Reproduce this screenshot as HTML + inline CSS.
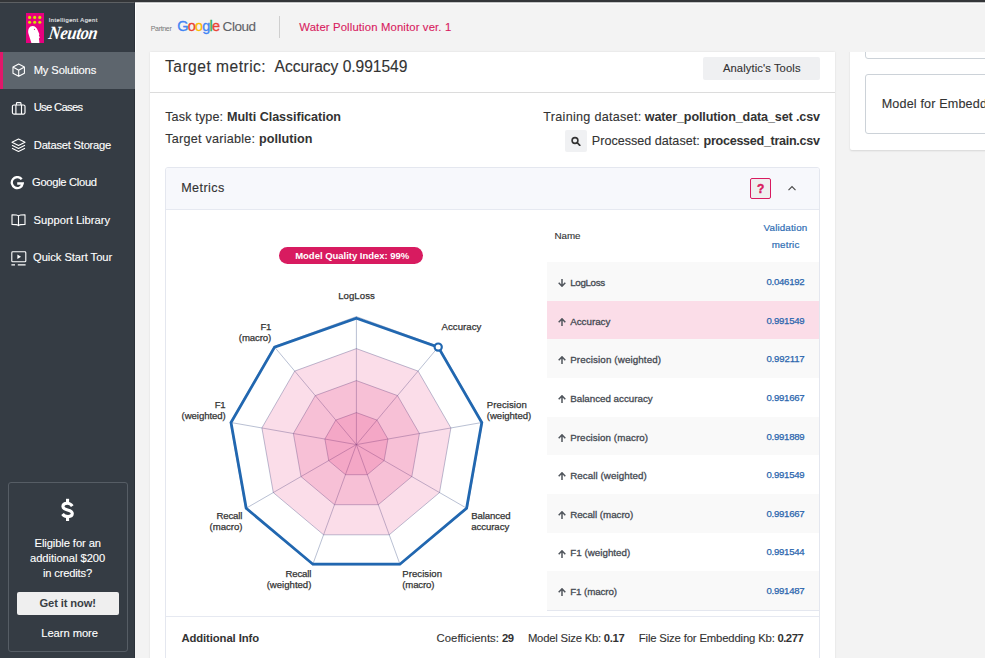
<!DOCTYPE html>
<html><head><meta charset="utf-8">
<style>
*{box-sizing:border-box;margin:0;padding:0}
html,body{width:985px;height:658px;overflow:hidden;background:#f3f3f3;font-family:"Liberation Sans",sans-serif;color:#333}
.abs{position:absolute}
.t{position:absolute;white-space:nowrap;z-index:5}
</style></head><body>
<!-- right card (scrolled under fixed header) -->
<div class="abs" style="left:849.5px;top:40px;width:160px;height:109.5px;background:#fff;box-shadow:0 1px 2px rgba(0,0,0,0.12);border-radius:2px"></div>
<div class="abs" style="left:865px;top:29px;width:140px;height:30px;border:1px solid #ccd2d8;border-radius:3px;background:#fff"></div>
<div class="abs" style="left:865px;top:74px;width:140px;height:60px;border:1px solid #ccd2d8;border-radius:3px;background:#fff"></div>
<!-- header strip -->
<div class="abs" style="left:135px;top:2px;width:850px;height:50px;background:#f3f3f3;border-top:1px solid #fff;border-left:1px solid #fff"></div>
<div class="abs" style="left:135px;top:2px;width:850px;height:1px;background:#c4c5c6"></div><div class="abs" style="left:136px;top:3px;width:849px;height:1px;background:#fbfbfb"></div>
<div class="abs" style="left:279px;top:16px;width:1px;height:22px;background:#cfcfcf"></div>

<!-- main card -->
<div class="abs" style="left:150px;top:52px;width:685px;height:620px;background:#fff;box-shadow:0 0 2px rgba(0,0,0,0.10)"></div>
<div class="abs" style="left:703px;top:57px;width:117px;height:22.5px;background:#eff0f2;border-radius:2px"></div>
<div class="abs" style="left:150px;top:92px;width:685px;height:1px;background:#dcdcdc"></div>
<div class="abs" style="left:565px;top:130px;width:22px;height:22px;background:#f0f1f3;border-radius:2px"></div>
<svg class="abs" style="left:571px;top:135.8px;width:10px;height:10px" viewBox="0 0 10 10"><circle cx="4" cy="4.5" r="2.9" fill="none" stroke="#333" stroke-width="1.6"/><path d="M6.2 6.7L8.8 9.3" stroke="#333" stroke-width="1.7" stroke-linecap="round"/></svg>

<!-- metrics panel -->
<div class="abs" style="left:165px;top:167px;width:655px;height:500px;border:1px solid #e4e7ef;border-radius:3px;background:#fff"></div>
<div class="abs" style="left:166px;top:168px;width:653px;height:41.5px;background:#f7f8fc;border-bottom:1px solid #e6e9f1;border-radius:2px 2px 0 0"></div>
<div class="abs" style="left:750px;top:178px;width:21px;height:21px;border:1px solid #d81b60;border-radius:2px;background:#efefef"></div>
<svg class="abs" style="left:787px;top:184px;width:10px;height:8px" viewBox="0 0 10 8"><path d="M1.5 6.1L5 2.5L8.5 6.1" fill="none" stroke="#4a4a4a" stroke-width="1.15"/></svg>
<div class="abs" style="left:279.4px;top:247px;width:144px;height:17px;border-radius:9px;background:#d81b60"></div>

<svg class="abs" style="left:0;top:0;width:985px;height:658px" viewBox="0 0 985 658">
<polygon points="356.4,412.6 377.0,420.1 387.9,439.0 384.1,460.6 367.3,474.7 345.5,474.7 328.7,460.6 324.9,439.0 335.8,420.1" fill="none" stroke="rgba(80,98,145,0.5)" stroke-width="0.8"/>
<polygon points="356.4,380.6 397.5,395.6 419.4,433.5 411.8,476.6 378.3,504.7 334.5,504.7 301.0,476.6 293.4,433.5 315.3,395.6" fill="none" stroke="rgba(80,98,145,0.5)" stroke-width="0.8"/>
<polygon points="356.4,348.6 418.1,371.1 450.9,427.9 439.5,492.6 389.2,534.8 323.6,534.8 273.3,492.6 261.9,427.9 294.7,371.1" fill="none" stroke="rgba(80,98,145,0.5)" stroke-width="0.8"/>
<polygon points="356.4,316.6 438.7,346.5 482.5,422.4 467.3,508.6 400.2,564.9 312.6,564.9 245.5,508.6 230.3,422.4 274.1,346.5" fill="none" stroke="rgba(80,98,145,0.5)" stroke-width="0.8"/>
<line x1="356.4" y1="444.6" x2="356.4" y2="316.6" stroke="rgba(80,98,145,0.5)" stroke-width="0.8"/>
<line x1="356.4" y1="444.6" x2="438.7" y2="346.5" stroke="rgba(80,98,145,0.5)" stroke-width="0.8"/>
<line x1="356.4" y1="444.6" x2="482.5" y2="422.4" stroke="rgba(80,98,145,0.5)" stroke-width="0.8"/>
<line x1="356.4" y1="444.6" x2="467.3" y2="508.6" stroke="rgba(80,98,145,0.5)" stroke-width="0.8"/>
<line x1="356.4" y1="444.6" x2="400.2" y2="564.9" stroke="rgba(80,98,145,0.5)" stroke-width="0.8"/>
<line x1="356.4" y1="444.6" x2="312.6" y2="564.9" stroke="rgba(80,98,145,0.5)" stroke-width="0.8"/>
<line x1="356.4" y1="444.6" x2="245.5" y2="508.6" stroke="rgba(80,98,145,0.5)" stroke-width="0.8"/>
<line x1="356.4" y1="444.6" x2="230.3" y2="422.4" stroke="rgba(80,98,145,0.5)" stroke-width="0.8"/>
<line x1="356.4" y1="444.6" x2="274.1" y2="346.5" stroke="rgba(80,98,145,0.5)" stroke-width="0.8"/>
<polygon points="356.4,348.6 418.1,371.1 450.9,427.9 439.5,492.6 389.2,534.8 323.6,534.8 273.3,492.6 261.9,427.9 294.7,371.1" fill="rgba(226,29,106,0.15)" stroke="none"/>
<polygon points="356.4,380.6 397.5,395.6 419.4,433.5 411.8,476.6 378.3,504.7 334.5,504.7 301.0,476.6 293.4,433.5 315.3,395.6" fill="rgba(226,29,106,0.15)" stroke="none"/>
<polygon points="356.4,412.6 377.0,420.1 387.9,439.0 384.1,460.6 367.3,474.7 345.5,474.7 328.7,460.6 324.9,439.0 335.8,420.1" fill="rgba(226,29,106,0.15)" stroke="none"/>
<polygon points="356.4,318.3 438.2,347.1 481.8,422.5 466.6,508.2 399.9,564.2 312.9,564.2 246.2,508.3 231.0,422.5 274.6,347.1" fill="none" stroke="#2167b0" stroke-width="2.8" stroke-linejoin="miter"/>
<circle cx="438.2" cy="347.1" r="3.6" fill="#fff" stroke="#2167b0" stroke-width="2.2"/>

</svg>

<div class="abs" style="left:547px;top:262.00px;width:272px;height:38.95px;background:#f9f9f9"></div>
<svg class="abs" style="left:558px;top:279.12px;width:8px;height:8px" viewBox="0 0 8 8"><path d="M4 0V7.1M0.7 3.8L4 7.2L7.3 3.8" fill="none" stroke="#50555c" stroke-width="1.5"/></svg>
<div class="abs" style="left:547px;top:300.65px;width:272px;height:38.95px;background:#fbdde8"></div>
<svg class="abs" style="left:558px;top:317.77px;width:8px;height:8px" viewBox="0 0 8 8"><path d="M4 8V0.9M0.7 4.2L4 0.8L7.3 4.2" fill="none" stroke="#50555c" stroke-width="1.5"/></svg>
<div class="abs" style="left:547px;top:339.30px;width:272px;height:38.95px;background:#f9f9f9"></div>
<svg class="abs" style="left:558px;top:356.43px;width:8px;height:8px" viewBox="0 0 8 8"><path d="M4 8V0.9M0.7 4.2L4 0.8L7.3 4.2" fill="none" stroke="#50555c" stroke-width="1.5"/></svg>
<div class="abs" style="left:547px;top:377.95px;width:272px;height:38.95px;background:#ffffff"></div>
<svg class="abs" style="left:558px;top:395.07px;width:8px;height:8px" viewBox="0 0 8 8"><path d="M4 8V0.9M0.7 4.2L4 0.8L7.3 4.2" fill="none" stroke="#50555c" stroke-width="1.5"/></svg>
<div class="abs" style="left:547px;top:416.60px;width:272px;height:38.95px;background:#f9f9f9"></div>
<svg class="abs" style="left:558px;top:433.73px;width:8px;height:8px" viewBox="0 0 8 8"><path d="M4 8V0.9M0.7 4.2L4 0.8L7.3 4.2" fill="none" stroke="#50555c" stroke-width="1.5"/></svg>
<div class="abs" style="left:547px;top:455.25px;width:272px;height:38.95px;background:#ffffff"></div>
<svg class="abs" style="left:558px;top:472.38px;width:8px;height:8px" viewBox="0 0 8 8"><path d="M4 8V0.9M0.7 4.2L4 0.8L7.3 4.2" fill="none" stroke="#50555c" stroke-width="1.5"/></svg>
<div class="abs" style="left:547px;top:493.90px;width:272px;height:38.95px;background:#f9f9f9"></div>
<svg class="abs" style="left:558px;top:511.03px;width:8px;height:8px" viewBox="0 0 8 8"><path d="M4 8V0.9M0.7 4.2L4 0.8L7.3 4.2" fill="none" stroke="#50555c" stroke-width="1.5"/></svg>
<div class="abs" style="left:547px;top:532.55px;width:272px;height:38.95px;background:#ffffff"></div>
<svg class="abs" style="left:558px;top:549.67px;width:8px;height:8px" viewBox="0 0 8 8"><path d="M4 8V0.9M0.7 4.2L4 0.8L7.3 4.2" fill="none" stroke="#50555c" stroke-width="1.5"/></svg>
<div class="abs" style="left:547px;top:571.20px;width:272px;height:38.95px;background:#f9f9f9"></div>
<svg class="abs" style="left:558px;top:588.33px;width:8px;height:8px" viewBox="0 0 8 8"><path d="M4 8V0.9M0.7 4.2L4 0.8L7.3 4.2" fill="none" stroke="#50555c" stroke-width="1.5"/></svg>

<div class="abs" style="left:547px;top:609.6px;width:272px;height:1px;background:#e4e7ef"></div>
<div class="abs" style="left:166px;top:616px;width:653px;height:1px;background:#e6e9f1"></div>

<!-- top bar + sidebar -->
<div class="abs" style="left:0;top:0;width:985px;height:2px;background:#333538"></div>
<div class="abs" style="left:0;top:2px;width:135px;height:656px;background:#353c44;border-top:1px solid #5d6063;border-right:1px solid #2b3139"></div>
<div class="abs" style="left:0;top:52px;width:135px;height:37px;background:#5d656d;border-left:3px solid #e0186a"></div>
<div class="abs" style="left:26px;top:13px;width:18px;height:30px;background:#e6007e"></div>
<svg class="abs" style="left:26px;top:13px;width:18px;height:30px" viewBox="0 0 18 30">
<g fill="#d2e300"><circle cx="3.6" cy="4.4" r="1.55"/><circle cx="8.7" cy="4.4" r="1.55"/><circle cx="13.8" cy="4.4" r="1.55"/><circle cx="3.6" cy="9.3" r="1.55"/><circle cx="8.7" cy="9.3" r="1.55"/><circle cx="13.8" cy="9.3" r="1.55"/></g>
<path d="M5.4 30 L2.4 20.5 C1.5 16.5 3.6 13 6.6 13 C9 13 10.8 14.8 11.6 17 L13.4 21.2 L12.9 22.2 L13.8 24.8 L12.9 25.6 L13.2 27.4 L13.4 30 Z" fill="#fff"/>
<circle cx="8.5" cy="16.3" r="0.6" fill="#e6007e"/>
</svg>
<svg class="abs" style="left:11.9px;top:63.2px;width:13.4px;height:14.3px" viewBox="0 0 14 15"><path d="M7 1L13 4.2V10.8L7 14L1 10.8V4.2Z M1 4.2L7 7.5L13 4.2 M7 7.5V14" fill="none" stroke="#fff" stroke-width="1.15" stroke-linejoin="round"/></svg>
<svg class="abs" style="left:11px;top:100px;width:15px;height:15px" viewBox="0 0 15 15"><path d="M2.9 5H12.5A1.5 1.5 0 0 1 14 6.5V12.6A1.5 1.5 0 0 1 12.5 14.1H2.9A1.5 1.5 0 0 1 1.4 12.6V6.5A1.5 1.5 0 0 1 2.9 5Z M4.9 5V14.1 M10.5 5V14.1 M5.4 4.8V3.5A0.9 0.9 0 0 1 6.3 2.6H9.1A0.9 0.9 0 0 1 10 3.5V4.8" fill="none" stroke="#fff" stroke-width="1.15"/></svg>
<svg class="abs" style="left:11px;top:138px;width:15px;height:15px" viewBox="0 0 15 15"><path d="M7.5 1L14 4.2L7.5 7.4L1 4.2Z M1 7.2L7.5 10.4L14 7.2 M1 10.2L7.5 13.4L14 10.2" fill="none" stroke="#fff" stroke-width="1.1" stroke-linejoin="round"/></svg>
<svg class="abs" style="left:9.9px;top:176px;width:14px;height:14px" viewBox="0 0 14 14"><path d="M11.7 3.3A5.5 5.5 0 1 0 12.7 7.5H7.2" fill="none" stroke="#fff" stroke-width="2.3"/></svg>
<svg class="abs" style="left:11px;top:213px;width:15px;height:15px" viewBox="0 0 15 15"><path d="M7.5 2.8C6.5 1.9 5 1.7 1 1.7V11.4C5 11.4 6.5 11.6 7.5 12.6C8.5 11.6 10 11.4 14 11.4V1.7C10 1.7 8.5 1.9 7.5 2.8Z M7.5 2.8V13" fill="none" stroke="#fff" stroke-width="1.1" stroke-linejoin="round"/></svg>
<svg class="abs" style="left:11px;top:251px;width:16px;height:15px" viewBox="0 0 16 15"><rect x="0.8" y="0.8" width="14" height="10" rx="0.9" fill="none" stroke="#fff" stroke-width="1.1"/><path d="M6.4 3.6L10 5.8L6.4 8Z" fill="#fff"/><path d="M0.4 13.8H4 M6.8 13.8H14.6" stroke="#fff" stroke-width="1.3"/></svg>
<div class="abs" style="left:8px;top:482.3px;width:120px;height:170px;border:1px solid #565d65;border-radius:3px"></div>
<div class="abs" style="left:17px;top:592px;width:102px;height:23px;background:#efefef;border-radius:2px"></div>
<svg class="abs" style="left:55px;top:495px;width:26px;height:30px" viewBox="55 495 26 30"><path d="M72.3 506.2C70.8 503.9 68.9 503.3 67.2 503.3C64.5 503.3 62.9 504.7 62.9 506.5C62.9 508.5 64.6 509.1 67.6 509.9C70.8 510.7 72.3 511.5 72.3 513.6C72.3 515.6 70.5 516.6 68 516.6C65.6 516.6 63.8 515.8 62.5 514" fill="none" stroke="#fff" stroke-width="3.1"/><rect x="66" y="498.8" width="3.1" height="4.4" fill="#fff"/><rect x="66" y="516.6" width="3.1" height="4.4" fill="#fff"/></svg>

<span class="t" id="partner" style="left:150.7px;top:25.30px;font-size:7px;line-height:7px;font-weight:normal;color:#777;font-family:'Liberation Sans',sans-serif;letter-spacing:-0.311px;">Partner</span>
<span class="t" id="goog" style="left:177.2px;top:19.05px;font-size:14.5px;line-height:14.5px;font-weight:normal;color:#333;font-family:'Liberation Sans',sans-serif;letter-spacing:-0.806px;-webkit-text-stroke:0.3px;"><span style="color:#4285f4">G</span><span style="color:#ea4335">o</span><span style="color:#fbbc05">o</span><span style="color:#4285f4">g</span><span style="color:#34a853">l</span><span style="color:#ea4335">e</span></span>
<span class="t" id="cloud" style="left:222.6px;top:20.05px;font-size:13.5px;line-height:13.5px;font-weight:normal;color:#5f6368;font-family:'Liberation Sans',sans-serif;letter-spacing:-0.445px;-webkit-text-stroke:0.12px;">Cloud</span>
<span class="t" id="ttl" style="left:299.3px;top:21.65px;font-size:11.3px;line-height:11.3px;font-weight:normal;color:#d81b60;font-family:'Liberation Sans',sans-serif;letter-spacing:0.143px;-webkit-text-stroke:0.12px;">Water Pollution Monitor ver. 1</span>
<span class="t" id="tm" style="left:165.0px;top:59.00px;font-size:15.6px;line-height:15.6px;font-weight:normal;color:#333;font-family:'Liberation Sans',sans-serif;letter-spacing:0.481px;-webkit-text-stroke:0.12px;">Target metric:</span>
<span class="t" id="tm2" style="left:274.6px;top:59.00px;font-size:15.6px;line-height:15.6px;font-weight:normal;color:#333;font-family:'Liberation Sans',sans-serif;letter-spacing:-0.044px;-webkit-text-stroke:0.12px;">Accuracy 0.991549</span>
<span class="t" id="at" style="left:722.9px;top:62.70px;font-size:11.2px;line-height:11.2px;font-weight:normal;color:#333;font-family:'Liberation Sans',sans-serif;letter-spacing:0.111px;-webkit-text-stroke:0.12px;">Analytic's Tools</span>
<span class="t" id="tt1" style="left:165.2px;top:111.00px;font-size:12.6px;line-height:12.6px;font-weight:normal;color:#333;font-family:'Liberation Sans',sans-serif;letter-spacing:0.133px;-webkit-text-stroke:0.12px;">Task type:</span>
<span class="t" id="tt2" style="left:227.0px;top:111.00px;font-size:12.6px;line-height:12.6px;font-weight:bold;color:#333;font-family:'Liberation Sans',sans-serif;letter-spacing:-0.040px;">Multi Classification</span>
<span class="t" id="tv1" style="left:165.2px;top:133.00px;font-size:12.6px;line-height:12.6px;font-weight:normal;color:#333;font-family:'Liberation Sans',sans-serif;letter-spacing:0.253px;-webkit-text-stroke:0.12px;">Target variable:</span>
<span class="t" id="tv2" style="left:259.0px;top:133.00px;font-size:12.6px;line-height:12.6px;font-weight:bold;color:#333;font-family:'Liberation Sans',sans-serif;letter-spacing:0.030px;">pollution</span>
<span class="t" id="td1" style="left:543.3px;top:111.00px;font-size:12.6px;line-height:12.6px;font-weight:normal;color:#333;font-family:'Liberation Sans',sans-serif;letter-spacing:0.285px;-webkit-text-stroke:0.12px;">Training dataset:</span>
<span class="t" id="td2" style="left:644.8px;top:111.00px;font-size:12.6px;line-height:12.6px;font-weight:bold;color:#333;font-family:'Liberation Sans',sans-serif;letter-spacing:-0.142px;">water_pollution_data_set .csv</span>
<span class="t" id="pd1" style="left:591.8px;top:135.00px;font-size:12.6px;line-height:12.6px;font-weight:normal;color:#333;font-family:'Liberation Sans',sans-serif;letter-spacing:0.005px;-webkit-text-stroke:0.12px;">Processed dataset:</span>
<span class="t" id="pd2" style="left:703.6px;top:135.00px;font-size:12.6px;line-height:12.6px;font-weight:bold;color:#333;font-family:'Liberation Sans',sans-serif;letter-spacing:-0.301px;">processed_train.csv</span>
<span class="t" id="mt" style="left:181.2px;top:182.00px;font-size:12.6px;line-height:12.6px;font-weight:normal;color:#333;font-family:'Liberation Sans',sans-serif;letter-spacing:0.434px;-webkit-text-stroke:0.12px;">Metrics</span>
<span class="t" id="q" style="left:757.0px;top:183.30px;font-size:12px;line-height:12px;font-weight:bold;color:#d81b60;font-family:'Liberation Sans',sans-serif;letter-spacing:0.000px;-webkit-text-stroke:0.4px #d81b60;">?</span>
<span class="t" id="bd" style="left:295.2px;top:251.05px;font-size:9.5px;line-height:9.5px;font-weight:bold;color:#fff;font-family:'Liberation Sans',sans-serif;letter-spacing:-0.024px;">Model Quality Index: 99%</span>
<span class="t" id="hn" style="left:554.6px;top:230.90px;font-size:9.8px;line-height:9.8px;font-weight:normal;color:#333;font-family:'Liberation Sans',sans-serif;letter-spacing:-0.114px;-webkit-text-stroke:0.12px;">Name</span>
<span class="t" id="hv1" style="left:763.6px;top:222.90px;font-size:9.8px;line-height:9.8px;font-weight:normal;color:#2e6db4;font-family:'Liberation Sans',sans-serif;letter-spacing:0.143px;-webkit-text-stroke:0.2px #2e6db4;">Validation</span>
<span class="t" id="hv2" style="left:771.8px;top:239.90px;font-size:9.8px;line-height:9.8px;font-weight:normal;color:#2e6db4;font-family:'Liberation Sans',sans-serif;letter-spacing:0.166px;-webkit-text-stroke:0.2px #2e6db4;">metric</span>
<span class="t" id="rn0" style="left:570.2px;top:277.90px;font-size:9.8px;line-height:9.8px;font-weight:normal;color:#454a52;font-family:'Liberation Sans',sans-serif;letter-spacing:-0.341px;-webkit-text-stroke:0.3px #454a52;">LogLoss</span>
<span class="t" id="rv0" style="left:766.4px;top:277.00px;font-size:9.6px;line-height:9.6px;font-weight:normal;color:#2a65ad;font-family:'Liberation Sans',sans-serif;letter-spacing:-0.245px;-webkit-text-stroke:0.25px #2a65ad;">0.046192</span>
<span class="t" id="rn1" style="left:570.2px;top:316.90px;font-size:9.8px;line-height:9.8px;font-weight:normal;color:#454a52;font-family:'Liberation Sans',sans-serif;letter-spacing:-0.014px;-webkit-text-stroke:0.3px #454a52;">Accuracy</span>
<span class="t" id="rv1" style="left:766.4px;top:316.00px;font-size:9.6px;line-height:9.6px;font-weight:normal;color:#2a65ad;font-family:'Liberation Sans',sans-serif;letter-spacing:-0.245px;-webkit-text-stroke:0.25px #2a65ad;">0.991549</span>
<span class="t" id="rn2" style="left:570.2px;top:354.90px;font-size:9.8px;line-height:9.8px;font-weight:normal;color:#454a52;font-family:'Liberation Sans',sans-serif;letter-spacing:0.112px;-webkit-text-stroke:0.3px #454a52;">Precision (weighted)</span>
<span class="t" id="rv2" style="left:766.4px;top:354.00px;font-size:9.6px;line-height:9.6px;font-weight:normal;color:#2a65ad;font-family:'Liberation Sans',sans-serif;letter-spacing:-0.145px;-webkit-text-stroke:0.25px #2a65ad;">0.992117</span>
<span class="t" id="rn3" style="left:570.2px;top:393.90px;font-size:9.8px;line-height:9.8px;font-weight:normal;color:#454a52;font-family:'Liberation Sans',sans-serif;letter-spacing:-0.018px;-webkit-text-stroke:0.3px #454a52;">Balanced accuracy</span>
<span class="t" id="rv3" style="left:766.4px;top:393.00px;font-size:9.6px;line-height:9.6px;font-weight:normal;color:#2a65ad;font-family:'Liberation Sans',sans-serif;letter-spacing:-0.245px;-webkit-text-stroke:0.25px #2a65ad;">0.991667</span>
<span class="t" id="rn4" style="left:570.2px;top:432.90px;font-size:9.8px;line-height:9.8px;font-weight:normal;color:#454a52;font-family:'Liberation Sans',sans-serif;letter-spacing:0.065px;-webkit-text-stroke:0.3px #454a52;">Precision (macro)</span>
<span class="t" id="rv4" style="left:766.4px;top:432.00px;font-size:9.6px;line-height:9.6px;font-weight:normal;color:#2a65ad;font-family:'Liberation Sans',sans-serif;letter-spacing:-0.245px;-webkit-text-stroke:0.25px #2a65ad;">0.991889</span>
<span class="t" id="rn5" style="left:570.2px;top:470.90px;font-size:9.8px;line-height:9.8px;font-weight:normal;color:#454a52;font-family:'Liberation Sans',sans-serif;letter-spacing:0.057px;-webkit-text-stroke:0.3px #454a52;">Recall (weighted)</span>
<span class="t" id="rv5" style="left:766.4px;top:470.00px;font-size:9.6px;line-height:9.6px;font-weight:normal;color:#2a65ad;font-family:'Liberation Sans',sans-serif;letter-spacing:-0.245px;-webkit-text-stroke:0.25px #2a65ad;">0.991549</span>
<span class="t" id="rn6" style="left:570.2px;top:509.90px;font-size:9.8px;line-height:9.8px;font-weight:normal;color:#454a52;font-family:'Liberation Sans',sans-serif;letter-spacing:-0.046px;-webkit-text-stroke:0.3px #454a52;">Recall (macro)</span>
<span class="t" id="rv6" style="left:766.4px;top:509.00px;font-size:9.6px;line-height:9.6px;font-weight:normal;color:#2a65ad;font-family:'Liberation Sans',sans-serif;letter-spacing:-0.245px;-webkit-text-stroke:0.25px #2a65ad;">0.991667</span>
<span class="t" id="rn7" style="left:570.2px;top:547.90px;font-size:9.8px;line-height:9.8px;font-weight:normal;color:#454a52;font-family:'Liberation Sans',sans-serif;letter-spacing:0.016px;-webkit-text-stroke:0.3px #454a52;">F1 (weighted)</span>
<span class="t" id="rv7" style="left:766.4px;top:547.00px;font-size:9.6px;line-height:9.6px;font-weight:normal;color:#2a65ad;font-family:'Liberation Sans',sans-serif;letter-spacing:-0.245px;-webkit-text-stroke:0.25px #2a65ad;">0.991544</span>
<span class="t" id="rn8" style="left:570.2px;top:586.90px;font-size:9.8px;line-height:9.8px;font-weight:normal;color:#454a52;font-family:'Liberation Sans',sans-serif;letter-spacing:-0.112px;-webkit-text-stroke:0.3px #454a52;">F1 (macro)</span>
<span class="t" id="rv8" style="left:766.4px;top:586.00px;font-size:9.6px;line-height:9.6px;font-weight:normal;color:#2a65ad;font-family:'Liberation Sans',sans-serif;letter-spacing:-0.245px;-webkit-text-stroke:0.25px #2a65ad;">0.991487</span>
<span class="t" id="l0" style="left:338.2px;top:291.00px;font-size:9.6px;line-height:9.6px;font-weight:normal;color:#333;font-family:'Liberation Sans',sans-serif;letter-spacing:0.053px;-webkit-text-stroke:0.25px #333;">LogLoss</span>
<span class="t" id="l1" style="left:441.5px;top:322.00px;font-size:9.6px;line-height:9.6px;font-weight:normal;color:#333;font-family:'Liberation Sans',sans-serif;letter-spacing:0.050px;-webkit-text-stroke:0.25px #333;">Accuracy</span>
<span class="t" id="l2a" style="left:486.8px;top:400.00px;font-size:9.6px;line-height:9.6px;font-weight:normal;color:#333;font-family:'Liberation Sans',sans-serif;letter-spacing:0.066px;-webkit-text-stroke:0.25px #333;">Precision</span>
<span class="t" id="l2b" style="left:486.8px;top:411.00px;font-size:9.6px;line-height:9.6px;font-weight:normal;color:#333;font-family:'Liberation Sans',sans-serif;letter-spacing:-0.033px;-webkit-text-stroke:0.25px #333;">(weighted)</span>
<span class="t" id="l3a" style="left:471.2px;top:511.00px;font-size:9.6px;line-height:9.6px;font-weight:normal;color:#333;font-family:'Liberation Sans',sans-serif;letter-spacing:-0.102px;-webkit-text-stroke:0.25px #333;">Balanced</span>
<span class="t" id="l3b" style="left:471.2px;top:522.00px;font-size:9.6px;line-height:9.6px;font-weight:normal;color:#333;font-family:'Liberation Sans',sans-serif;letter-spacing:-0.056px;-webkit-text-stroke:0.25px #333;">accuracy</span>
<span class="t" id="l4a" style="left:402.3px;top:569.00px;font-size:9.6px;line-height:9.6px;font-weight:normal;color:#333;font-family:'Liberation Sans',sans-serif;letter-spacing:0.029px;-webkit-text-stroke:0.25px #333;">Precision</span>
<span class="t" id="l4b" style="left:402.3px;top:580.00px;font-size:9.6px;line-height:9.6px;font-weight:normal;color:#333;font-family:'Liberation Sans',sans-serif;letter-spacing:-0.158px;-webkit-text-stroke:0.25px #333;">(macro)</span>
<span class="t" id="l5a" style="left:285.5px;top:569.00px;font-size:9.6px;line-height:9.6px;font-weight:normal;color:#333;font-family:'Liberation Sans',sans-serif;letter-spacing:-0.154px;-webkit-text-stroke:0.25px #333;">Recall</span>
<span class="t" id="l5b" style="left:266.7px;top:580.00px;font-size:9.6px;line-height:9.6px;font-weight:normal;color:#333;font-family:'Liberation Sans',sans-serif;letter-spacing:-0.011px;-webkit-text-stroke:0.25px #333;">(weighted)</span>
<span class="t" id="l6a" style="left:216.5px;top:511.00px;font-size:9.6px;line-height:9.6px;font-weight:normal;color:#333;font-family:'Liberation Sans',sans-serif;letter-spacing:-0.154px;-webkit-text-stroke:0.25px #333;">Recall</span>
<span class="t" id="l6b" style="left:209.6px;top:522.00px;font-size:9.6px;line-height:9.6px;font-weight:normal;color:#333;font-family:'Liberation Sans',sans-serif;letter-spacing:-0.041px;-webkit-text-stroke:0.25px #333;">(macro)</span>
<span class="t" id="l7a" style="left:214.8px;top:400.00px;font-size:9.6px;line-height:9.6px;font-weight:normal;color:#333;font-family:'Liberation Sans',sans-serif;letter-spacing:-0.303px;-webkit-text-stroke:0.25px #333;">F1</span>
<span class="t" id="l7b" style="left:181.6px;top:411.00px;font-size:9.6px;line-height:9.6px;font-weight:normal;color:#333;font-family:'Liberation Sans',sans-serif;letter-spacing:-0.077px;-webkit-text-stroke:0.25px #333;">(weighted)</span>
<span class="t" id="l8a" style="left:260.4px;top:322.00px;font-size:9.6px;line-height:9.6px;font-weight:normal;color:#333;font-family:'Liberation Sans',sans-serif;letter-spacing:-0.303px;-webkit-text-stroke:0.25px #333;">F1</span>
<span class="t" id="l8b" style="left:238.8px;top:333.00px;font-size:9.6px;line-height:9.6px;font-weight:normal;color:#333;font-family:'Liberation Sans',sans-serif;letter-spacing:-0.091px;-webkit-text-stroke:0.25px #333;">(macro)</span>
<span class="t" id="ai" style="left:181.4px;top:632.65px;font-size:11.3px;line-height:11.3px;font-weight:bold;color:#333;font-family:'Liberation Sans',sans-serif;letter-spacing:-0.097px;">Additional Info</span>
<span class="t" id="co1" style="left:436.6px;top:632.65px;font-size:11.3px;line-height:11.3px;font-weight:normal;color:#333;font-family:'Liberation Sans',sans-serif;letter-spacing:0.028px;-webkit-text-stroke:0.12px;">Coefficients:</span>
<span class="t" id="co1b" style="left:502.0px;top:632.65px;font-size:11.3px;line-height:11.3px;font-weight:bold;color:#333;font-family:'Liberation Sans',sans-serif;letter-spacing:-0.578px;">29</span>
<span class="t" id="co2" style="left:527.9px;top:632.65px;font-size:11.3px;line-height:11.3px;font-weight:normal;color:#333;font-family:'Liberation Sans',sans-serif;letter-spacing:-0.206px;-webkit-text-stroke:0.12px;">Model Size Kb:</span>
<span class="t" id="co2b" style="left:603.8px;top:632.65px;font-size:11.3px;line-height:11.3px;font-weight:bold;color:#333;font-family:'Liberation Sans',sans-serif;letter-spacing:-0.367px;">0.17</span>
<span class="t" id="co3" style="left:638.8px;top:632.65px;font-size:11.3px;line-height:11.3px;font-weight:normal;color:#333;font-family:'Liberation Sans',sans-serif;letter-spacing:-0.155px;-webkit-text-stroke:0.12px;">File Size for Embedding Kb:</span>
<span class="t" id="co3b" style="left:777.4px;top:632.65px;font-size:11.3px;line-height:11.3px;font-weight:bold;color:#333;font-family:'Liberation Sans',sans-serif;letter-spacing:-0.470px;">0.277</span>
<span class="t" id="mf" style="left:881.7px;top:98.00px;font-size:12.6px;line-height:12.6px;font-weight:normal;color:#333;font-family:'Liberation Sans',sans-serif;letter-spacing:0.155px;-webkit-text-stroke:0.12px;">Model for Embedding</span>
<span class="t" id="ia" style="left:48.8px;top:18.40px;font-size:5.8px;line-height:5.8px;font-weight:normal;color:#e3e5e7;font-family:'Liberation Sans',sans-serif;letter-spacing:0.452px;-webkit-text-stroke:0.15px #e3e5e7;">Intelligent Agent</span>
<span class="t" id="neu" style="left:48.4px;top:25.55px;font-size:16.5px;line-height:16.5px;font-weight:bold;color:#fff;font-family:'Liberation Serif',serif;letter-spacing:-0.300px;font-style:italic;transform:skewX(-8deg) scaleY(1.13);transform-origin:0 83%;">Neuton</span>
<span class="t" id="m0" style="left:33.7px;top:64.70px;font-size:11.2px;line-height:11.2px;font-weight:normal;color:#fff;font-family:'Liberation Sans',sans-serif;letter-spacing:-0.132px;-webkit-text-stroke:0.12px;">My Solutions</span>
<span class="t" id="m1" style="left:33.7px;top:101.70px;font-size:11.2px;line-height:11.2px;font-weight:normal;color:#fff;font-family:'Liberation Sans',sans-serif;letter-spacing:-0.665px;-webkit-text-stroke:0.12px;">Use Cases</span>
<span class="t" id="m2" style="left:33.8px;top:139.70px;font-size:11.2px;line-height:11.2px;font-weight:normal;color:#fff;font-family:'Liberation Sans',sans-serif;letter-spacing:-0.240px;-webkit-text-stroke:0.12px;">Dataset Storage</span>
<span class="t" id="m3" style="left:32.0px;top:176.70px;font-size:11.2px;line-height:11.2px;font-weight:normal;color:#fff;font-family:'Liberation Sans',sans-serif;letter-spacing:-0.302px;-webkit-text-stroke:0.12px;">Google Cloud</span>
<span class="t" id="m4" style="left:33.6px;top:214.70px;font-size:11.2px;line-height:11.2px;font-weight:normal;color:#fff;font-family:'Liberation Sans',sans-serif;letter-spacing:0.000px;-webkit-text-stroke:0.12px;">Support Library</span>
<span class="t" id="m5" style="left:33.0px;top:251.70px;font-size:11.2px;line-height:11.2px;font-weight:normal;color:#fff;font-family:'Liberation Sans',sans-serif;letter-spacing:-0.053px;-webkit-text-stroke:0.12px;">Quick Start Tour</span>
<span class="t" id="cr1" style="left:34.6px;top:537.70px;font-size:11.2px;line-height:11.2px;font-weight:normal;color:#fff;font-family:'Liberation Sans',sans-serif;letter-spacing:-0.100px;-webkit-text-stroke:0.12px;">Eligible for an</span>
<span class="t" id="cr2" style="left:30.0px;top:552.70px;font-size:11.2px;line-height:11.2px;font-weight:normal;color:#fff;font-family:'Liberation Sans',sans-serif;letter-spacing:-0.050px;-webkit-text-stroke:0.12px;">additional $200</span>
<span class="t" id="cr3" style="left:43.0px;top:567.70px;font-size:11.2px;line-height:11.2px;font-weight:normal;color:#fff;font-family:'Liberation Sans',sans-serif;letter-spacing:-0.180px;-webkit-text-stroke:0.12px;">in credits?</span>
<span class="t" id="gi" style="left:39.5px;top:597.70px;font-size:11.2px;line-height:11.2px;font-weight:bold;color:#3a3f45;font-family:'Liberation Sans',sans-serif;letter-spacing:-0.130px;">Get it now!</span>
<span class="t" id="lm" style="left:41.3px;top:627.70px;font-size:11.2px;line-height:11.2px;font-weight:normal;color:#fff;font-family:'Liberation Sans',sans-serif;letter-spacing:-0.058px;-webkit-text-stroke:0.12px;">Learn more</span>
</body></html>
